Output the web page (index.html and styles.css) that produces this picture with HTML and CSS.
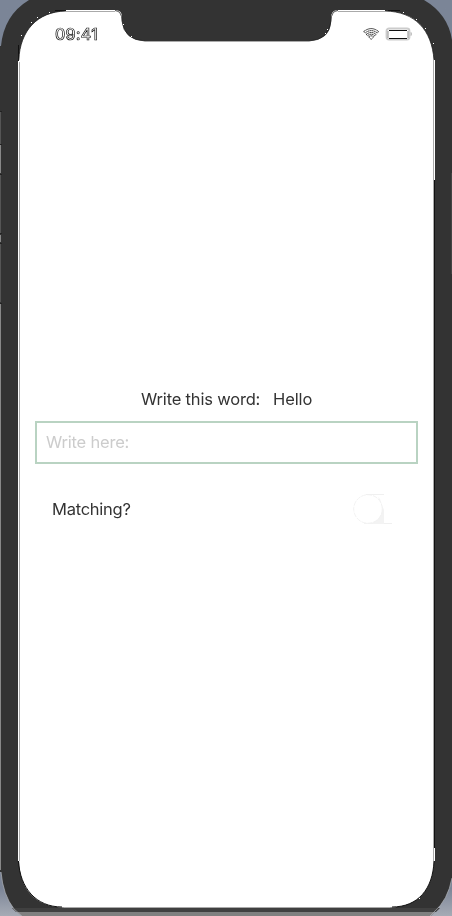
FILE: index.html
```html
<!DOCTYPE html>
<html lang="en">
<head>
<meta charset="utf-8">
<meta name="viewport" content="width=device-width">
<title>Write this word</title>
<link rel="stylesheet" href="styles.css">
</head>
<body>
<div class="phone">
  <svg class="frame" width="452" height="916" viewBox="0 0 452 916" fill="none" aria-hidden="true">
    <defs><linearGradient id="metal" x1="0" y1="0" x2="0" y2="1"><stop stop-color="#7b8597"/><stop offset=".97" stop-color="#7d8698"/><stop offset="1" stop-color="#a6abb5"/></linearGradient></defs>
    <path fill="url(#metal)" d="M0 0H452V916H0Z"/>
    <path fill="#333" d="M29 0H424Q448 14 452 40V878Q448 900 434 912L430 916H22L14 909Q3 895 1 872V46Q4 15 29 0Z"/>
    <path fill="#333" d="M0 46H3V872H0Z"/>
    <path fill="#404040" d="M12 908H440L436 912H16Z"/>
    <path fill="#808080" d="M17 912H435L431 916H22Z"/>
    <path stroke="#b0b3b8" stroke-width=".7" d="M1 872Q3 895 14 909L22 916M452 878Q448 900 434 912L430 916"/>
    <path stroke="#555" d="M.5 111V144M.5 175V233M.5 244V302"/>
    <path stroke="#888" d="M.5 145V173M.5 235V242M.5 304V870"/>
    <path stroke="#222" d="M0 111.500H2M0 144.500H2M0 174.500H2M0 233.500H2M0 243.500H2M0 303.500H2"/>
    <path stroke="#444" d="M451.500 173V274"/>
    <path fill="#fff" d="M18 60V861H19C20 889 35 907 64 907.500H390C418 907 433 890 434 861H435V848H434V180H435V60H434C432 30 415 11 385 11V10H338Q331 10 331 18V23Q329 40 309 41H145Q124 40 122 21V17Q122 10 115 10H66V11C37 12 20 31 19 60Z"/>
    <path stroke="#aaa" d="M19.500 62V861M433.500 60V861M64 907.500H390M66 11.500H115M338 11.500H385M145 41.500H309"/>
    <path stroke="#111" d="M18.500 45V61M434.500 180V848M18.500 861C20 888 36 907 62 907M434 861C433 889 418 907 392 907M66 10.500H55M388 10.500H400"/>
    <path stroke="#222" stroke-width=".8" d="M18.800 60C20 31 37 11.500 66 11M385 11C415 11.500 432 30 434 60M115 10.500Q122 11 122 21Q124 40 145 41M338 10.500Q331 11 331 21Q329 40 309 41"/>
    <path fill="#fff" d="M21 35h1v1h-1zM31 22h1v1h-1zM37 17h1v1h-1zM49 12h1v1h-1zM123 24h1v1h-1zM131 36h1v1h-1zM327 29h1v1h-1zM325 33h1v1h-1zM403 12h1v1h-1zM416 19h1v1h-1zM425 28h1v1h-1zM433 43h1v1h-1zM419 898h1v1h-1z"/>
  </svg>
  <main class="screen">
    <header class="status">
      <span class="time">09:41</span>
      <svg class="indicators" width="50" height="14" viewBox="0 0 50 14" fill="none" aria-hidden="true">
        <g transform="translate(.7 .6)" stroke="#111" stroke-width=".9" stroke-dasharray="1.600 .45">
          <path d="M1 4Q8.500 -2 16 4L14.500 5.300Q8.500 .7 2.500 5.300Z"/>
          <path d="M3.500 6.800Q8.500 3 13.500 6.800L12 8Q8.500 5.300 5 8Z"/>
          <path d="M6 9.200Q8.500 7.300 11 9.200L8.500 11.800Z"/>
        </g>
        <rect x="24.500" y="1.500" width="23" height="11" rx="2.500" stroke="#ccc" stroke-width="1.800"/>
        <path stroke="#111" d="M27 3.500H45M27 11.500H45"/>
        <path stroke="#777" stroke-width=".8" d="M26 4V11M46 4V11"/>
        <path fill="#bbb" d="M48.500 5Q50 5 50 7T48.500 9Z"/>
      </svg>
    </header>
    <section class="content">
      <div class="prompt"><span class="label">Write this word:</span><span class="word">Hello</span></div>
      <div class="field"><span class="placeholder">Write here:</span></div>
      <div class="match">
        <span class="question">Matching?</span>
        <svg class="toggle" width="40" height="31" viewBox="0 0 40 31" fill="none" aria-hidden="true">
          <path fill="#f3f3f3" d="M27 5L29 11L31 16V30H11V29Q24 27 28 18Q29 11 25 3Z"/>
          <circle cx="15" cy="15" r="14.300" fill="#fff" stroke="#f2f2f2" stroke-dasharray="5 1"/>
          <path stroke="#f0f0f0" d="M13 .5H31M31 29.500H39"/>
        </svg>
      </div>
    </section>
  </main>
</div>
</body>
</html>
```
FILE: styles.css
```css
* { box-sizing: border-box; }
body { margin: 0; background: #fff; font-family: Inter, "Liberation Sans", sans-serif; color: #333; overflow: hidden; }
.phone { position: relative; width: 452px; height: 916px; }
.frame { position: absolute; inset: 0; display: block; }
.screen { position: relative; display: flex; flex-direction: column; height: 916px; padding: 24px 34px 0 35px; will-change: transform; }
.status { display: flex; justify-content: space-between; height: 20px; padding: 0 6px 0 20px; }
.time { width: 46px; font-size: 16px; line-height: 20px; font-weight: 500; letter-spacing: .2px; white-space: nowrap; color: #fff; -webkit-text-stroke: .7px #111; }
.indicators { display: block; margin-top: 3px; }
.content { margin-top: 345px; }
.prompt { display: flex; gap: 13px; height: 20px; margin-left: 106px; font-size: 16.500px; line-height: 20px; white-space: nowrap; }
.label, .word, .question { color: #333; }
.label { width: 119px; letter-spacing: -.18px; }
.word { letter-spacing: -.1px; }
.field { height: 43px; margin-top: 12px; padding: 9px; border: 2px solid #b9d3c2; }
.placeholder { display: block; font-size: 16.500px; line-height: 20px; letter-spacing: -.2px; color: #ccc; }
.match { display: flex; justify-content: space-between; align-items: center; height: 31px; margin-top: 30px; padding: 0 25px 0 17px; }
.question { margin-bottom: 2px; font-size: 16.500px; line-height: 20px; letter-spacing: -.25px; }
.toggle { display: block; }
```
